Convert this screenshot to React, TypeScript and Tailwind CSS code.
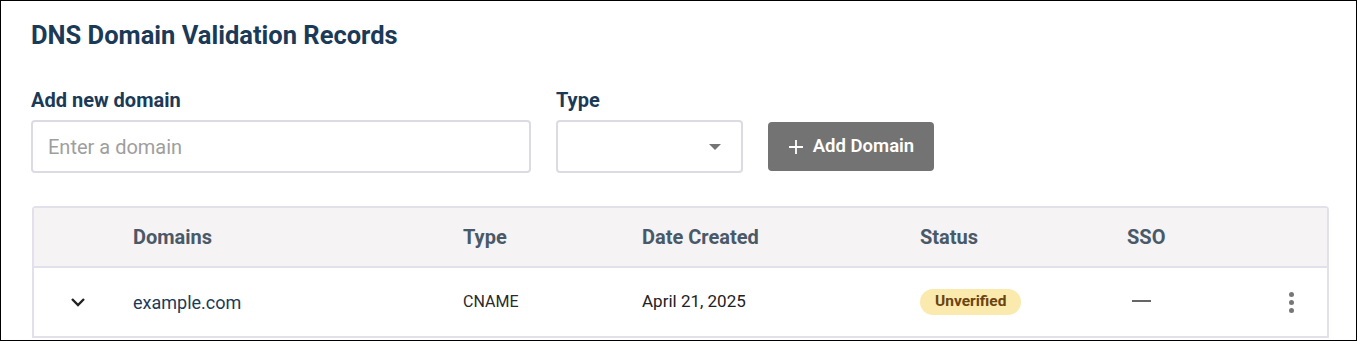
import React from "react";

export default function App() {
  return (
    <div className="w-[1358px] h-[342px] bg-white" style={{ fontFamily: "Roboto, 'Liberation Sans', sans-serif" }}>
      <div className="w-[1357px] h-[341px] border border-black overflow-hidden px-[30px] pt-[19px]">
        <h1 className="text-[25.5px] leading-[30px] font-bold text-[#1b3a57]">DNS Domain Validation Records</h1>
        <div className="flex items-end mt-[38px]">
          <div className="flex flex-col w-[500px]">
            <label className="text-[20px] font-bold leading-[24px] text-[#1b3a57]">Add new domain</label>
            <div className="mt-[8px] h-[53px] rounded-[4px] border-2 border-[#dcdbe4] flex items-center px-[15px]">
              <span className="text-[20px] text-[#9e9e9e]">Enter a domain</span>
            </div>
          </div>
          <div className="flex flex-col w-[187px] ml-[25px]">
            <label className="text-[20px] font-bold leading-[24px] text-[#1b3a57]">Type</label>
            <div className="mt-[8px] h-[53px] rounded-[4px] border-2 border-[#dcdbe4] flex items-center justify-end pr-[20px]">
              <div className="w-0 h-0 border-l-[6px] border-r-[6px] border-t-[6px] border-l-transparent border-r-transparent border-t-[#757575]" />
            </div>
          </div>
          <button className="ml-[25px] mb-[2px] h-[49px] w-[166px] rounded-[4px] bg-[#737373] text-white flex items-center justify-center gap-[9px] text-[18.5px] font-semibold">
            <svg width="16" height="16" viewBox="0 0 16 16"><path d="M8 1v14M1 8h14" stroke="white" strokeWidth="1.8" /></svg>
            Add Domain
          </button>
        </div>
        <div className="mt-[33px] ml-[1px] w-[1297px] rounded-t-[4px] border-2 border-b-0 border-[#e2e0ea]">
          <div className="h-[60px] bg-[#f5f3f4] border-b-2 border-[#e2e0ea] flex items-center text-[20px] font-bold text-[#4a5968]">
            <div className="w-[99px]" />
            <div className="w-[330px]">Domains</div>
            <div className="w-[179px]">Type</div>
            <div className="w-[278px]">Date Created</div>
            <div className="w-[207px]">Status</div>
            <div>SSO</div>
          </div>
          <div className="h-[70px] flex items-center border-b-2 border-[#e2e0ea]">
            <div className="w-[99px] flex pl-[36px]">
              <svg width="16" height="10" viewBox="0 0 16 10"><path d="M2 2l6 6 6-6" fill="none" stroke="#222" strokeWidth="2.4" /></svg>
            </div>
            <div className="w-[330px] text-[18px] text-[#1b3a57]">example.com</div>
            <div className="w-[179px] text-[16px] text-[#2a2a2a]">CNAME</div>
            <div className="w-[278px] text-[17px] text-[#222]">April 21, 2025</div>
            <div className="w-[207px]">
              <span className="inline-flex items-center h-[26px] px-[15px] rounded-full bg-[#fbeaae] text-[#6b4410] text-[15.5px] font-bold">Unverified</span>
            </div>
            <div className="w-[150px] pl-[5px] pb-[2px]">
              <div className="w-[19px] h-[2px] bg-[#666]" />
            </div>
            <div className="flex flex-col gap-[3px] ml-[12px]">
              <div className="w-[5px] h-[5px] rounded-full bg-[#777]" />
              <div className="w-[5px] h-[5px] rounded-full bg-[#777]" />
              <div className="w-[5px] h-[5px] rounded-full bg-[#777]" />
            </div>
          </div>
        </div>
      </div>
    </div>
  );
}
